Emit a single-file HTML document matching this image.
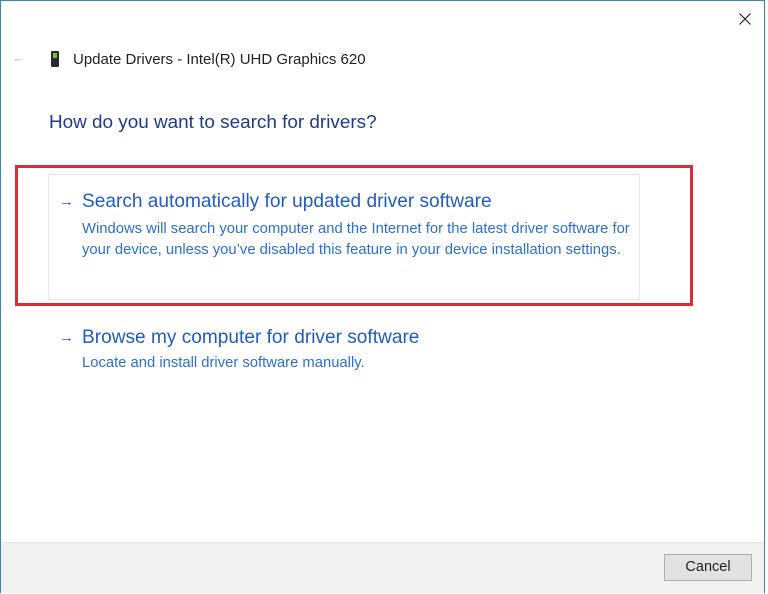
<!DOCTYPE html>
<html><head><style>
body{margin:0;width:768px;height:594px;background:#fff;position:relative;overflow:hidden;font-family:"Liberation Sans",sans-serif;}
.win{position:absolute;left:0;top:0;width:763px;height:591px;border:1px solid #3a84b8;background:#fff;}
.abs{position:absolute;white-space:nowrap;}
</style></head><body>
<div class="win">
 <svg class="abs" style="left:738px;top:12px" width="12" height="12"><path d="M0.5 0.5L11.5 11.5M11.5 0.5L0.5 11.5" stroke="#222" stroke-width="1.2"/></svg>
 <div class="abs" style="left:11px;top:49px;font-size:13px;color:#bbb;">←</div>
 <div class="abs" style="left:50px;top:50px;width:8px;height:16px;background:#2a2a2a;border-radius:1px;"></div>
 <div class="abs" style="left:52px;top:52px;width:4px;height:5px;background:#6fbf4a;"></div>
 <div class="abs" style="left:72px;top:50px;font-size:15px;color:#222;">Update Drivers - Intel(R) UHD Graphics 620</div>
 <div class="abs" style="left:48px;top:111px;font-size:18.9px;color:#1e3a8a;">How do you want to search for drivers?</div>
 <div class="abs" style="left:47px;top:173px;width:590px;height:124px;border:1px solid #e8e8e8;"></div>
 <div class="abs" style="left:14px;top:164px;width:672px;height:135px;border:3px solid #d42e3a;"></div>
 <div class="abs" style="left:58px;top:192px;font-size:15px;color:#2a62c9;">→</div>
 <div class="abs" style="left:81px;top:190px;font-size:19.1px;color:#1f5cc4;">Search automatically for updated driver software</div>
 <div class="abs" style="left:81px;top:218px;font-size:14.8px;line-height:21px;color:#2c6fd0;">Windows will search your computer and the Internet for the latest driver software for<br>your device, unless you’ve disabled this feature in your device installation settings.</div>
 <div class="abs" style="left:58px;top:328px;font-size:15px;color:#2a62c9;">→</div>
 <div class="abs" style="left:81px;top:326px;font-size:19.1px;color:#1f5cc4;">Browse my computer for driver software</div>
 <div class="abs" style="left:81px;top:354px;font-size:14.8px;color:#2c6fd0;">Locate and install driver software manually.</div>
 <div class="abs" style="left:0;top:541px;width:763px;height:50px;background:#f0f0f0;border-top:1px solid #e6e6e6;"></div>
 <div class="abs" style="left:663px;top:553px;width:88px;height:27px;background:#e1e1e1;border:1px solid #adadad;box-sizing:border-box;text-align:center;line-height:25px;font-size:14.5px;color:#222;">Cancel</div>
</div>
</body></html>
